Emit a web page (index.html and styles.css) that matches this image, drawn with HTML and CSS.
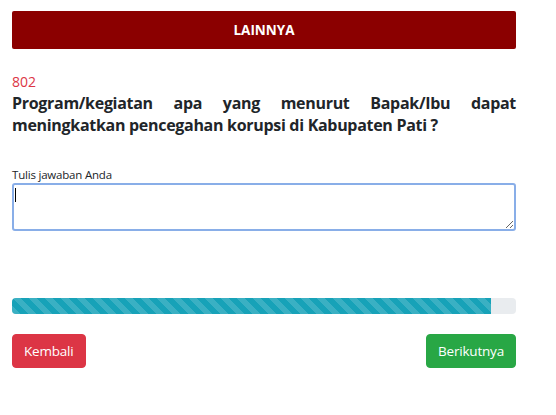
FILE: index.html
```html
<!DOCTYPE html>
<html lang="id">
<head>
<meta charset="utf-8">
<title>Survei</title>
<link rel="stylesheet" href="styles.css">
</head>
<body>
<div class="page">
  <div class="header">LAINNYA</div>
  <div class="qnum">802</div>
  <h4 class="question">Program/kegiatan apa yang menurut Bapak/Ibu dapat meningkatkan pencegahan korupsi di Kabupaten Pati ?</h4>
  <label class="label" for="jawab">Tulis jawaban Anda</label>
  <div class="field">
    <textarea id="jawab" class="answer"></textarea>
    <span class="caret"></span>
  </div>
  <div class="progress"><div class="bar" style="width:95%"></div></div>
  <div class="nav">
    <button class="btn btn-back">Kembali</button>
    <button class="btn btn-next">Berikutnya</button>
  </div>
</div>
</body>
</html>
```
FILE: styles.css
```css
html, body {
  margin: 0;
  padding: 0;
  background: #fff;
}
.page {
  width: 504px;
  padding: 11px 12px;
  font-family: "Open Sans", "Noto Sans", sans-serif;
  color: #212529;
}
.header {
  height: 38px;
  background: #8b0000;
  border-radius: 2px;
  color: #fff;
  font-weight: bold;
  font-size: 13.5px;
  display: flex;
  align-items: center;
  justify-content: center;
}
.qnum {
  margin-top: 23px;
  color: #dc3545;
  font-size: 14px;
  line-height: 20px;
}
.question {
  margin: 0;
  font-size: 16px;
  letter-spacing: -0.3px;
  line-height: 22px;
  font-weight: bold;
  text-align: justify;
  color: #212529;
}
.label {
  display: block;
  margin-top: 31px;
  font-size: 11.5px;
  letter-spacing: -0.2px;
  line-height: 16px;
  color: #212529;
}
.field {
  position: relative;
}
.answer {
  display: block;
  box-sizing: border-box;
  width: 504px;
  height: 48px;
  margin: 0;
  border: 2px solid #89aee8;
  border-radius: 3px;
  outline: none;
  font-family: inherit;
  font-size: 14px;
  padding: 2px 3px;
}
.caret {
  position: absolute;
  left: 3px;
  top: 5px;
  width: 1px;
  height: 14px;
  background: #000;
}
.progress {
  margin-top: 67px;
  height: 16px;
  background: #e9ecef;
  border-radius: 4px;
  overflow: hidden;
  display: flex;
}
.bar {
  height: 100%;
  background-color: #17a2b8;
  background-image: linear-gradient(45deg, rgba(255,255,255,.15) 25%, transparent 25%, transparent 50%, rgba(255,255,255,.15) 50%, rgba(255,255,255,.15) 75%, transparent 75%, transparent);
  background-size: 16px 16px;
}
.nav {
  margin-top: 20px;
  display: flex;
  justify-content: space-between;
}
.btn {
  font-family: inherit;
  font-size: 13.5px;
  letter-spacing: -0.2px;
  line-height: 20px;
  padding: 6px 11px;
  border: 1px solid transparent;
  border-radius: 4px;
  color: #fff;
  cursor: pointer;
}
.btn-back {
  background: #dc3545;
  border-color: #dc3545;
}
.btn-next {
  background: #28a745;
  border-color: #28a745;
}
```
